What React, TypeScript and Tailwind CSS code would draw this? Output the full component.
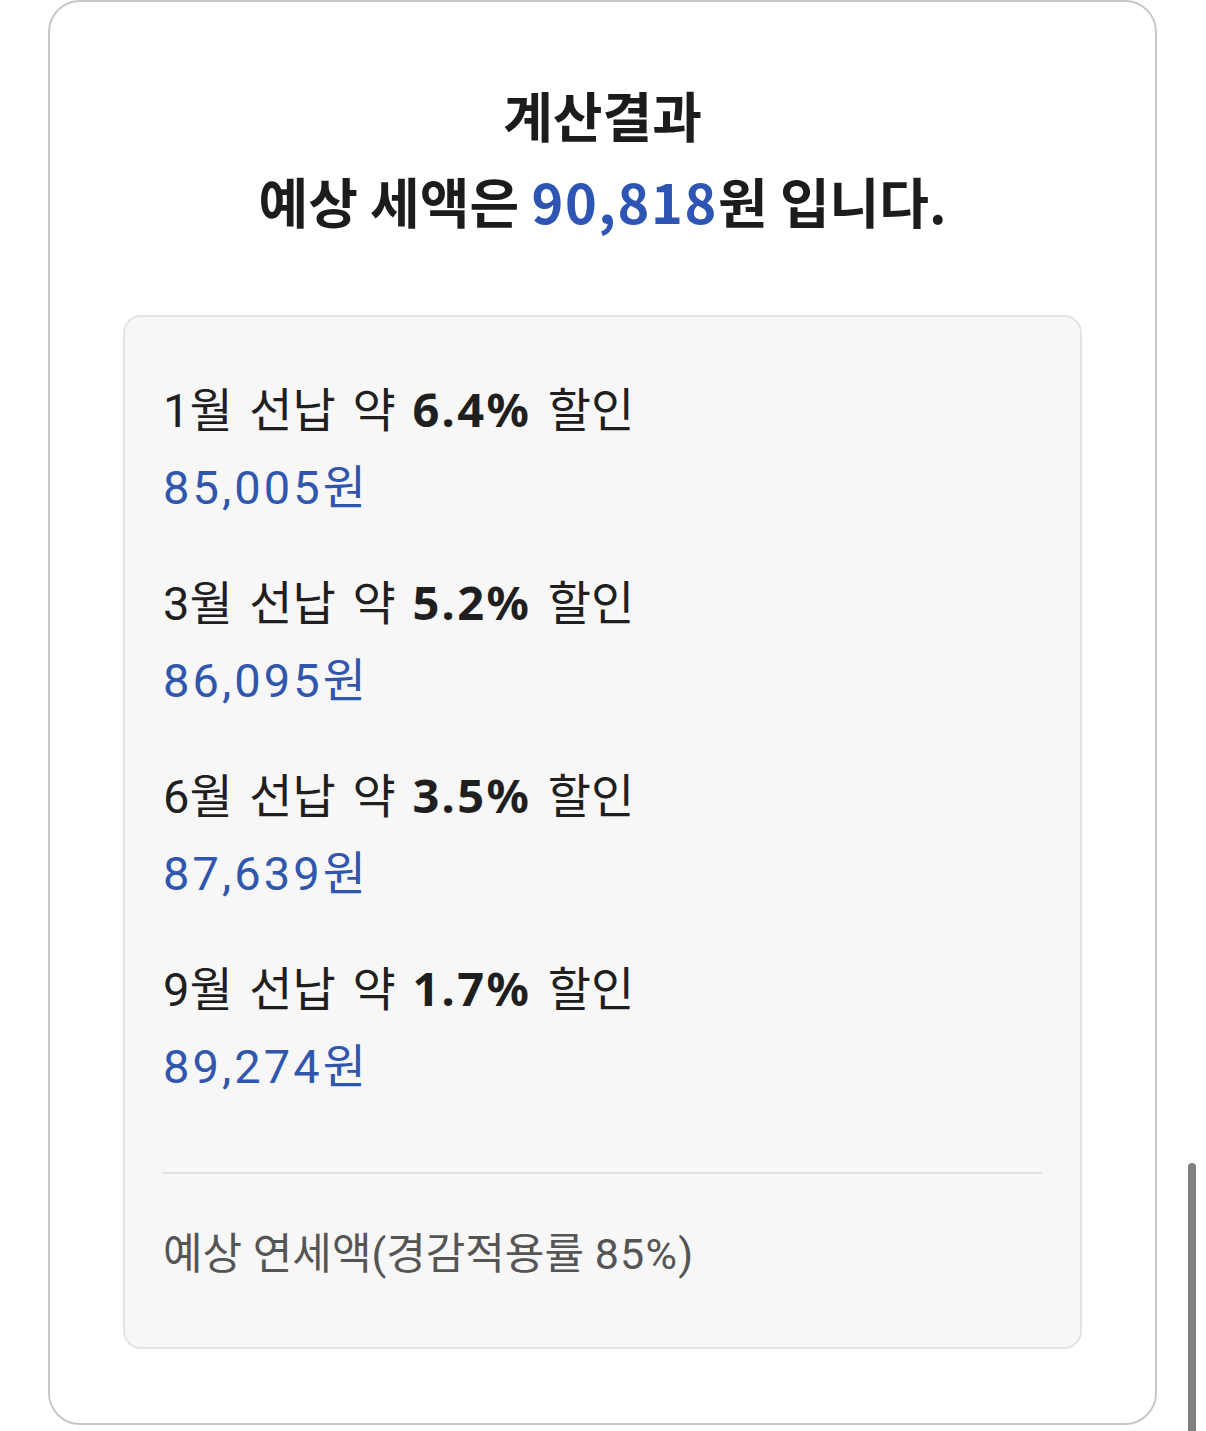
const plans = [
  { month: 1, rate: "6.4%", amount: "85,005" },
  { month: 3, rate: "5.2%", amount: "86,095" },
  { month: 6, rate: "3.5%", amount: "87,639" },
  { month: 9, rate: "1.7%", amount: "89,274" },
];

function PlanRow({ month, rate, amount }: { month: number; rate: string; amount: string }) {
  return (
    <li className="flex flex-col">
      <p className="text-[47px] leading-[77px] text-[#1f1f1f] [word-spacing:5px]">
        {month}월 선납 약{" "}
        <span className="font-['Noto_Sans',sans-serif] font-bold tracking-[0.05em]">{rate}</span> 할인
      </p>
      <p className="text-[47px] leading-[77px] text-[#3056ae]">
        <span className="tracking-[0.065em]">{amount}</span>원
      </p>
    </li>
  );
}

export default function App() {
  return (
    <div className="relative h-[1431px] bg-white font-['Roboto','Noto_Sans_CJK_KR',sans-serif]">
      <section className="ml-[48px] mr-[49px] rounded-[32px] border-2 border-[#c8c8c8] px-[73px] pt-[70px] pb-[74px]">
        <h2 className="text-center font-['Noto_Sans_CJK_KR',sans-serif] text-[54px] font-bold leading-[86px] text-[#1c1c1c]">
          계산결과
          <br />
          예상 세액은 <span className="text-[#2f55b4] tracking-[0.03em]">90,818</span>원 입니다.
        </h2>

        <div className="mt-[71px] rounded-[18px] border-2 border-[#e3e3e3] bg-[#f7f7f7] px-[38px] pt-[54px] pb-[54px]">
          <ul className="flex flex-col gap-[38px]">
            {plans.map((p) => (
              <PlanRow key={p.month} {...p} />
            ))}
          </ul>
          <hr className="mt-[67px] border-t-2 border-[#e2e2e2]" />
          <p className="mt-[42px] text-[43px] leading-[77px] text-[#555555]">
            예상 연세액(경감적용률 <span className="tracking-[0.03em]">85%</span>)
          </p>
        </div>
      </section>

      {/* overlay scroll indicator */}
      <div className="absolute left-[1188px] top-[1163px] bottom-0 w-[8px] rounded-t-full bg-[#808080]" />
    </div>
  );
}
